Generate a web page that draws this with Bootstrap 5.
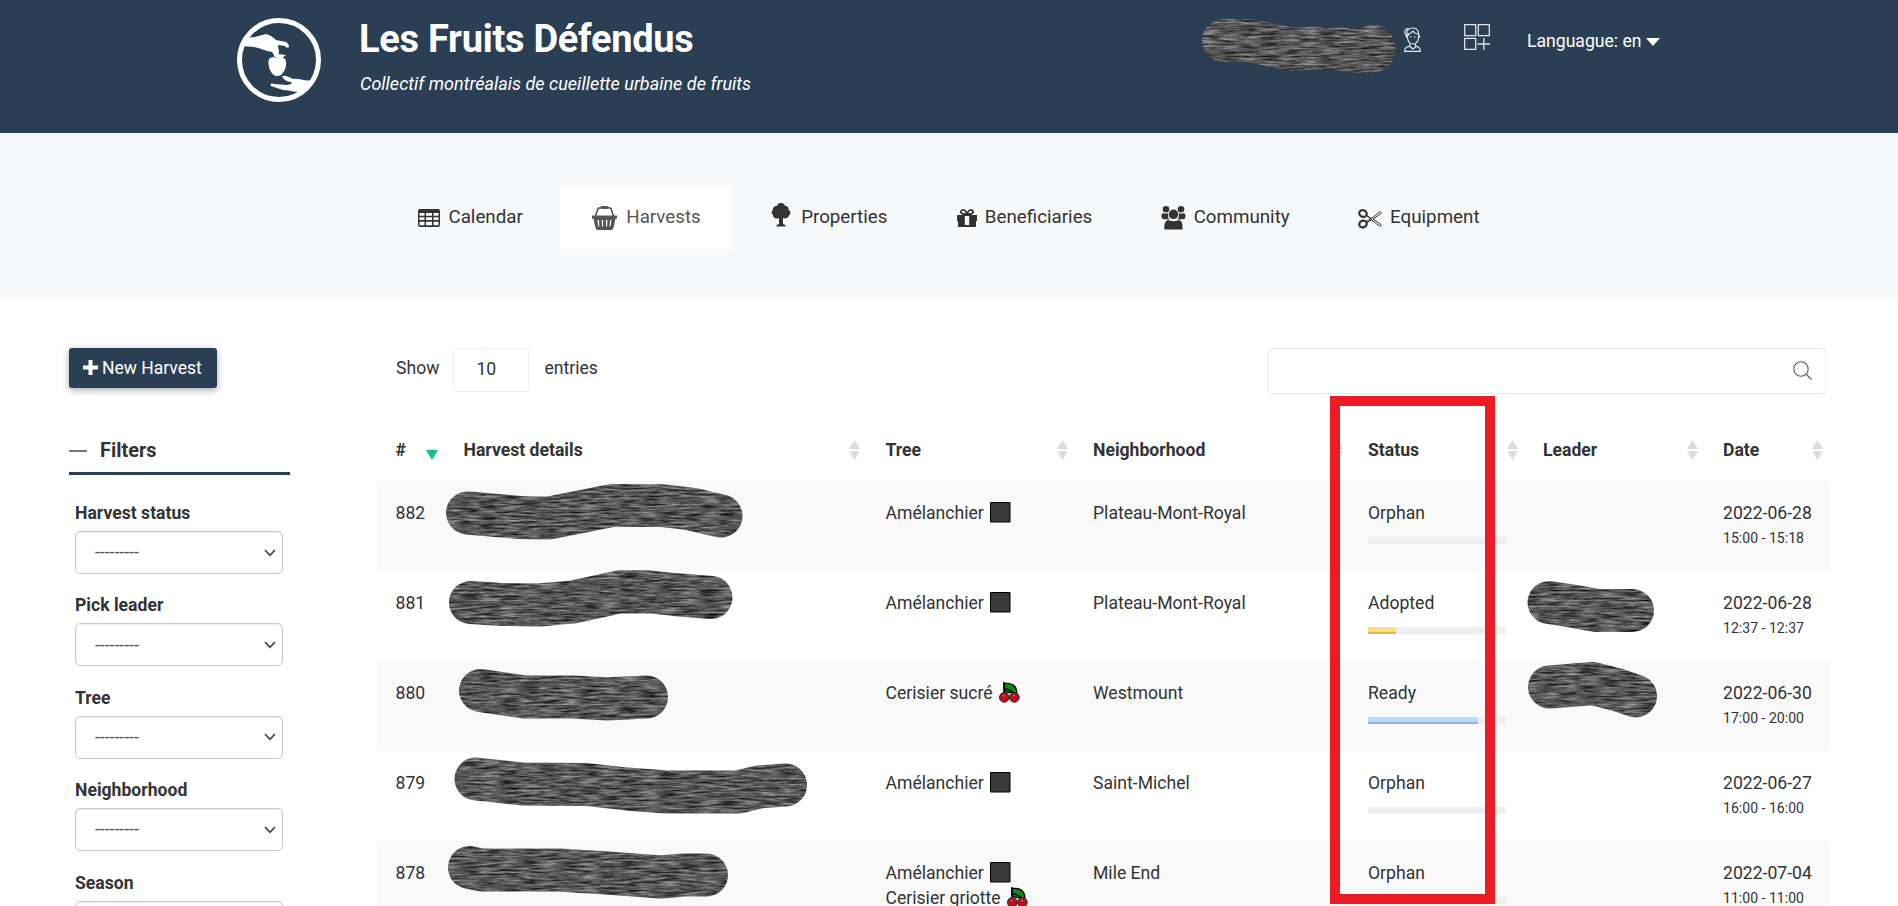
<!DOCTYPE html>
<html lang="en">
<head>
<meta charset="utf-8">
<meta name="viewport" content="width=device-width, initial-scale=1">
<title>Harvests - Les Fruits Défendus</title>
<link href="https://cdn.jsdelivr.net/npm/bootstrap@5.3.0/dist/css/bootstrap.min.css" rel="stylesheet">
<style>
  :root { --navy: #2b3f54; --ink: #333; }
  body { font-family: Roboto, "Liberation Sans", sans-serif; font-size: 17.6px; line-height: 25.2px; color: var(--ink); height: 906px; overflow: hidden; position: relative; background: #fff; }
  .site-header { background: var(--navy); height: 133px; padding: 18px 238.5px 0 237px; }
  .site-title { font-size: 38px; line-height: 42px; font-weight: 700; letter-spacing: -.28px; }
  .site-tagline { font-size: 18.05px; line-height: 26px; font-style: italic; margin: 11px 0 0 1px; }
  .brand-text { margin-left: 38px; }
  .user-tools { padding-top: 6px; }
  .language { padding-top: 5px; }
  .caret { width: 0; height: 0; border: 7px solid transparent; border-top: 8px solid #fff; border-bottom: 0; margin-left: 4px; }
  .icon-user { margin: 3px 43px 0 0; }
  .icon-apps { margin-right: 37px; }
  .main-menu { background: #f7f8fa; height: 165px; padding-top: 52px; gap: 6.4px; font-size: 18.75px; }
  .main-menu .nav-link { color: var(--ink); height: 64px; padding: 1px 31px 0; border-radius: 5px 5px 0 0; }
  .main-menu .nav-link.active { background: #fff; color: #555; }
  .main-menu svg { flex: none; fill: currentColor; }
  .page-body { padding: 50px 68px 0 69px; height: 608px; overflow: hidden; }
  .side-panel { width: 221px; flex: none; margin-right: 87px; }
  .btn-harvest { --bs-btn-bg: var(--navy); --bs-btn-color: #fff; width: 148px; height: 40px; border: 0; border-radius: 3px; font-size: 17.5px; padding: 0 0 0 14px; box-shadow: 0 2px 7px rgba(0,0,0,.35); white-space: nowrap; }
  .filters-title { margin-top: 48px; height: 39px; border-bottom: 3px solid var(--navy); font-size: 19.9px; font-weight: 700; padding-top: 2px; }
  .filters-title i { width: 18px; height: 2px; background: #777; margin: 12px 13px 0 0; }
  .filter-list { padding: 25px 7px 0 6px; }
  .filter-list label { font-weight: 700; display: block; height: 31px; line-height: 26px; }
  .filter-list .form-select { height: 43px; font-size: 17.6px; color: #555; border: 1px solid #c8c8c8; border-radius: 5px; padding: 0 0 0 19px; margin-bottom: 18.4px; box-shadow: inset 0 1px 2px rgba(0,0,0,.09);
    background-image: url("data:image/svg+xml,%3Csvg xmlns='http://www.w3.org/2000/svg' viewBox='0 0 12 8'%3E%3Cpath fill='none' stroke='%23444' stroke-width='1.8' d='M1 1l5 5.3L11 1'/%3E%3C/svg%3E"); background-size: 12px 8px; background-position: right 6px center; }
  .toolbar { height: 46px; padding-left: 19px; padding-right: 4.5px; }
  .len-box { width: 76px; height: 44px; border: 1px solid #eee; border-radius: 3px; padding: 7.5px 0 0 22px; margin: 0 15px 0 14px; }
  .toolbar span { padding-top: 8px; }
  .search-box { width: 558px; height: 46px; border: 1px solid #eaeaea; border-radius: 3px; padding: 0 13px 2px 0; }
  .harvests { table-layout: fixed; width: 1453px; margin: 25px 0 0; border-collapse: collapse; color: var(--ink); }
  .harvests th { height: 62px; padding: 1px 7px 0 18.5px; font-weight: 700; }
  .harvests td { height: 90px; padding: 20px 18.5px 0 18.5px; vertical-align: top; white-space: nowrap; }
  .harvests tbody tr:nth-child(odd) { background: #f9f9f9; }
  .harvests small { display: block; font-size: 14.08px; }
  .harvests .progress { height: 7px; border-radius: 0; background: #efefef; margin-top: 10.8px; }
  .bar-adopted { background: #fddd77; border-bottom: 2px solid #d4ba68; }
  .bar-ready { background: #b8daff; border-bottom: 2px solid #9ab6d6; }
  .glyph { width: 21px; height: 21px; margin-left: 2px; vertical-align: -4px; }
  .markup { position: absolute; left: 0; top: 0; pointer-events: none; }
</style>
</head>
<body>
<svg width="0" height="0" class="position-absolute">
  <symbol id="sort" viewBox="0 0 11 20"><path fill="#dcdcdc" d="M5.500 0L11 9H0zM0 11h11l-5.500 9z"/></symbol>
  <symbol id="square" viewBox="0 0 21 21"><path fill="#3a3a3a" stroke="#000" d="M.5.5h19.500v19.500H.5z"/></symbol>
  <symbol id="cherry" viewBox="0 0 21 21"><path d="M5 1.500C12 .8 17.500 3 17.800 10.500 11 11 6 11 5 8z" fill="#128a12" stroke="#000" stroke-width="1.400"/><path d="M5 0v12M6 7c4 0 7 2 10 6" stroke="#000" stroke-width="1.400" fill="none"/><g fill="#b5101b" stroke="#222" stroke-width="1"><circle cx="5.300" cy="15.400" r="4.800"/><circle cx="15.400" cy="15.400" r="4.800"/></g><g fill="#e8606a"><circle cx="4.600" cy="13.600" r="1"/><circle cx="14.800" cy="13.600" r="1"/></g></symbol>
</svg>

<header class="site-header d-flex text-white">
  <svg width="84" height="84" viewBox="0 0 84 84" fill="#fff">
    <circle cx="42" cy="42" r="39.500" fill="none" stroke="#fff" stroke-width="5"/>
    <path d="M5 28l4-8 9-1 11-3c4 1 7 3 10 6l10 2c2 1 3 3 3 5-1 1-3 1-4-1l-7-1 1 7-1 5c-2 2-4 0-4-2l-2-3c-7-1-12-4-18-5l-13-1z"/>
    <path d="M32 41c2-2 5-2 7-1 4-2 9-1 10 3 1 7-3 15-9 15s-10-11-8-17zM37 38l4-2 8 1-4 3z"/>
    <path d="M45 58c5-1 8 2 11 3 6-1 12 3 20 1l-8 11c-7 3-15-1-22-1l-12-4c-1-2 0-3 3-2l13 1c3-1 6-1 4-3-4 0-8-3-9-6z"/>
  </svg>
  <div class="brand-text">
    <h1 class="site-title m-0">Les Fruits Défendus</h1>
    <div class="site-tagline">Collectif montréalais de cueillette urbaine de fruits</div>
  </div>
  <div class="user-tools d-flex ms-auto align-items-start">
    <svg class="icon-user" width="17" height="25" viewBox="0 0 17 25" fill="none" stroke="#dfe5ea" stroke-width="1.200"><path d="M3 8C2 3 5 1 9 1s6 3 5.500 7v3c-.5 4-3 6-5.500 6s-5-2-5.500-6zM3 7c4 0 5-2 6-3 1 2 3 3 6 3M1 6C0 3 3 1 5 2M4 11c-2 0-2-3-1-3M14 11c2 0 2-3 .5-3M6 10h1.500M10 10h1.500M6 16v3c-3 1-5.300 1-5.300 5.300h15.600C16.300 20 14 20 11.500 19v-3M5 19l4 3 4-3M1 6c0 3 3 4 4 1"/></svg>
    <svg class="icon-apps" width="26" height="26" viewBox="0 0 26 26" fill="none" stroke="#dfe5ea" stroke-width="1.300"><path d="M.7.7h11v11H.7zM14.300.7h11v11h-11zM.7 14.300h11v11H.7zM19.800 14v12M13.500 20h12.500"/></svg>
    <div class="language d-flex align-items-center">Languague: en<span class="caret"></span></div>
  </div>
</header>

<nav class="main-menu nav justify-content-center">
  <a class="nav-link d-flex align-items-center" href="#"><svg width="22" height="20" viewBox="0 0 22 20" class="me-2"><path fill-rule="evenodd" d="M2 1h18a2 2 0 0 1 2 2v14a2 2 0 0 1-2 2H2a2 2 0 0 1-2-2V3a2 2 0 0 1 2-2zm-.5 4v2.800h5V5zm6.500 0v2.800h6V5zm7.500 0v2.800h5V5zm-14 4.300V12h5V9.300zm6.500 0V12h6V9.300zm7.500 0V12h5V9.300zm-14 4.400v3.500h5v-3.500zm6.500 0v3.500h6v-3.500zm7.500 0v3.500h5v-3.500z"/></svg>Calendar</a>
  <a class="nav-link active d-flex align-items-center" href="#"><svg width="27" height="24" viewBox="0 0 27 24" style="margin-right:8px"><path d="M4.500 10L7 2.500 10 1.500h7l3 1L22.500 10" fill="none" stroke="currentColor" stroke-width="1.600"/><path d="M10 0h7v3h-7z"/><path fill-rule="evenodd" d="M1 9.500h25v3.200h-1.500l-2 9-1.500 2.300H6l-1.500-2.300-2-9H1zM6.500 14l.8 6.500h1L8 14zm4.200 0l.3 6.500h1.100V14zm4.300 0v6.500h1.100l.3-6.500zm4 0l-.5 6.500h1l.9-6.500z"/></svg>Harvests</a>
  <a class="nav-link d-flex align-items-center" href="#"><svg width="20" height="24" viewBox="0 0 20 24" style="margin:-6px 10px 0 2px"><path d="M10 0c3 0 4 2 4 3 3 0 4 2 3.500 4C20 8 20 11 18 12.500c-1 3-4 3.500-6 2.500v6l2.500 1v1.500h-9V22l2.500-1v-6c-3 1.500-6 0-6-3C0 10 0 8 2 7c-.5-2 1-4 4-4 0-1 1-3 4-3z"/></svg>Properties</a>
  <a class="nav-link d-flex align-items-center" href="#"><svg width="20" height="20" viewBox="0 0 20 20" style="margin:0 8px 0 1px"><path fill-rule="evenodd" d="M7 5.500h6L15 7h5v6h-1v6H1v-6H0V7h5zm.8 2.500v9h4.400V8z"/><path d="M10 6C4 7 3 4 4.500 2.500S9 2 10 6c1-4 4-5 5.500-3.500S16 7 10 6z" fill="none" stroke="currentColor" stroke-width="1.700"/></svg>Beneficiaries</a>
  <a class="nav-link d-flex align-items-center" href="#"><svg width="25" height="24" viewBox="0 0 25 24" class="me-2"><circle cx="5" cy="3.300" r="3.300"/><circle cx="20" cy="3.300" r="3.300"/><circle cx="12.500" cy="8.300" r="4.800"/><path d="M2 7c1.500 1 4 1 5 0 0 3 0 5 1.500 6.500L1.500 13C0 11 0 8.500 2 7zM23 7c-1.500 1-4 1-5 0 0 3 0 5-1.500 6.500l7-.5C25 11 25 8.500 23 7zM7 14c3 1.500 8 1.500 11 0 3 1 4 4 3.500 9.500h-18C3 18 4 15 7 14z"/></svg>Community</a>
  <a class="nav-link d-flex align-items-center" href="#"><svg width="24" height="20" viewBox="0 0 24 20" class="me-2" style="margin-top:2px"><g fill="none" stroke="currentColor"><ellipse cx="5" cy="4.500" rx="3.800" ry="3.200" stroke-width="2.200" transform="rotate(25 5 4.500)"/><ellipse cx="5" cy="15" rx="3.800" ry="3.200" stroke-width="2.200" transform="rotate(-25 5 15)"/><path stroke-width="1" d="M8.500 6.500l5 3L21.500 3c1.500-.5 2 1 1 2L15 10l7.500 5c1 1 .5 2.500-1 2l-8-6-5 2.500M8 13l5.500-4M8.500 6.500L15 12"/></g></svg>Equipment</a>
</nav>

<div class="page-body d-flex">
  <aside class="side-panel">
    <button class="btn btn-harvest d-flex align-items-center"><svg width="15" height="15" viewBox="0 0 15 15" style="margin:-2px 4px 0 0"><path fill="#fff" d="M5.500 0h4v5.500H15v4H9.500V15h-4V9.500H0v-4h5.500z"/></svg>New Harvest</button>
    <div class="filters-title d-flex"><i></i>Filters</div>
    <div class="filter-list">
      <label>Harvest status</label><select class="form-select"><option>---------</option></select>
      <label>Pick leader</label><select class="form-select"><option>---------</option></select>
      <label>Tree</label><select class="form-select"><option>---------</option></select>
      <label>Neighborhood</label><select class="form-select"><option>---------</option></select>
      <label>Season</label><select class="form-select"><option>---------</option></select>
    </div>
  </aside>

  <main>
    <div class="toolbar d-flex align-items-start">
      <span>Show</span><div class="len-box">10</div><span>entries</span>
      <div class="search-box ms-auto d-flex align-items-center justify-content-end"><svg width="19" height="19" viewBox="0 0 19 19" fill="none" stroke="#555" stroke-width="1.100"><circle cx="8" cy="8" r="7.200"/><path d="M13 13l5.500 5.500"/></svg></div>
    </div>
    <table class="harvests">
      <colgroup><col style="width:68px"><col style="width:422px"><col style="width:207.500px"><col style="width:275px"><col style="width:175px"><col style="width:180px"><col style="width:125.500px"></colgroup>
      <thead><tr>
        <th><div class="d-flex justify-content-between align-items-center">#<svg width="12" height="10" viewBox="0 0 12 10" style="margin-top:10px"><path fill="#0fc08c" d="M0 0h12L6 10z"/></svg></div></th>
        <th><div class="d-flex justify-content-between align-items-center">Harvest details<svg width="11" height="20"><use href="#sort"/></svg></div></th>
        <th><div class="d-flex justify-content-between align-items-center">Tree<svg width="11" height="20"><use href="#sort"/></svg></div></th>
        <th><div class="d-flex justify-content-between align-items-center">Neighborhood<svg width="11" height="20"><use href="#sort"/></svg></div></th>
        <th><div class="d-flex justify-content-between align-items-center">Status<svg width="11" height="20"><use href="#sort"/></svg></div></th>
        <th><div class="d-flex justify-content-between align-items-center">Leader<svg width="11" height="20"><use href="#sort"/></svg></div></th>
        <th><div class="d-flex justify-content-between align-items-center">Date<svg width="11" height="20"><use href="#sort"/></svg></div></th>
      </tr></thead>
      <tbody>
        <tr><td>882</td><td></td><td>Amélanchier <svg class="glyph"><use href="#square"/></svg></td><td>Plateau-Mont-Royal</td><td>Orphan<div class="progress"></div></td><td></td><td>2022-06-28<small>15:00 - 15:18</small></td></tr>
        <tr><td>881</td><td></td><td>Amélanchier <svg class="glyph"><use href="#square"/></svg></td><td>Plateau-Mont-Royal</td><td>Adopted<div class="progress"><div class="progress-bar bar-adopted" style="width:20%"></div></div></td><td></td><td>2022-06-28<small>12:37 - 12:37</small></td></tr>
        <tr><td>880</td><td></td><td>Cerisier sucré <svg class="glyph"><use href="#cherry"/></svg></td><td>Westmount</td><td>Ready<div class="progress"><div class="progress-bar bar-ready" style="width:80%"></div></div></td><td></td><td>2022-06-30<small>17:00 - 20:00</small></td></tr>
        <tr><td>879</td><td></td><td>Amélanchier <svg class="glyph"><use href="#square"/></svg></td><td>Saint-Michel</td><td>Orphan<div class="progress"></div></td><td></td><td>2022-06-27<small>16:00 - 16:00</small></td></tr>
        <tr><td>878</td><td></td><td>Amélanchier <svg class="glyph"><use href="#square"/></svg><br>Cerisier griotte <svg class="glyph"><use href="#cherry"/></svg></td><td>Mile End</td><td>Orphan<div class="progress"></div></td><td></td><td>2022-07-04<small>11:00 - 11:00</small></td></tr>
      </tbody>
    </table>
  </main>
</div>

<!-- redaction strokes and the highlight frame drawn over the page -->
<svg class="markup" width="1898" height="906" viewBox="0 0 1898 906" fill="none">
  <filter id="brush" filterUnits="userSpaceOnUse" x="0" y="0" width="1898" height="906" color-interpolation-filters="sRGB">
    <feTurbulence type="fractalNoise" baseFrequency=".05 .5" numOctaves="4" seed="4"/>
    <feColorMatrix values=".8 0 0 0 -.06  .8 0 0 0 -.06  .8 0 0 0 -.06  0 0 0 0 1"/>
    <feComposite in2="SourceGraphic" operator="in"/>
  </filter>
  <g filter="url(#brush)" stroke="#555" stroke-width="43" stroke-linecap="round" stroke-linejoin="round">
    <path d="M1223.500 40.500L1250 40.500 1290 49 1330 47.500 1360 51.500 1372 51.500"/>
    <path d="M1373 46L1374 50"/>
    <path d="M467.500 513L520 517.500 549 518 612 505.500 661 505.500 691 509 721 516"/>
    <path d="M470.500 602.500L502 604.500 539 605 573 602 620 591.700 651 592 674 594.500 711 597.500"/>
    <path d="M480.500 690.500L525 697 573 697 607 699 646.500 697"/>
    <path d="M476 779L522 784 586 784.500 627 789 667 792 738 792 759 787 785.500 785"/>
    <path d="M469.500 867.500L482 870 559 870 607 873 661 877 684 875 706.500 875"/>
    <path d="M1549 602.500L1566 605 1597 610.500 1632.500 610.500"/>
    <path d="M1549.500 687L1593 683.500 1618 690 1635.500 696"/>
  </g>
  <rect x="1335" y="401" width="155" height="498" stroke="#ed1c24" stroke-width="10"/>
</svg>
<script src="https://cdn.jsdelivr.net/npm/bootstrap@5.3.0/dist/js/bootstrap.bundle.min.js"></script>
</body>
</html>
